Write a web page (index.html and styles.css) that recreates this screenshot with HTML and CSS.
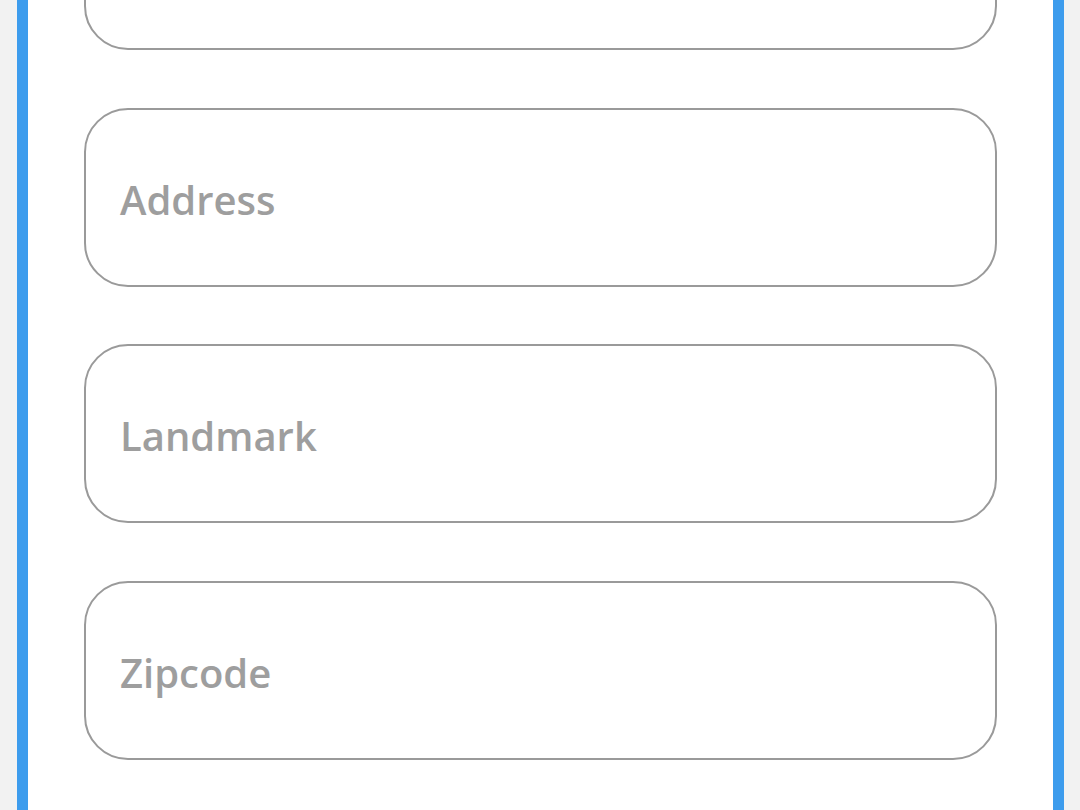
FILE: index.html
```html
<!DOCTYPE html>
<html lang="en">
<head>
<meta charset="utf-8">
<title>Address form</title>
<link rel="stylesheet" href="styles.css">
</head>
<body>
  <main class="frame">
    <form class="fields">
      <div class="field"></div>
      <div class="field"><span class="placeholder">Address</span></div>
      <div class="field"><span class="placeholder">Landmark</span></div>
      <div class="field"><span class="placeholder">Zipcode</span></div>
    </form>
  </main>
</body>
</html>
```

FILE: styles.css
```css
html, body {
  margin: 0;
  padding: 0;
  height: 100%;
  overflow: hidden;
}

body {
  background: #f2f2f2;
  font-family: "Open Sans", "Liberation Sans", sans-serif;
}

.frame {
  box-sizing: border-box;
  margin-left: 17px;
  width: 1047px;
  height: 810px;
  background: #ffffff;
  border-left: 11px solid #3d9ced;
  border-right: 11px solid #3d9ced;
  padding: 0 56px;
  overflow: hidden;
}

.fields {
  display: flex;
  flex-direction: column;
  gap: 57.5px;
  margin-top: -129px;
}

.field {
  box-sizing: border-box;
  height: 179px;
  border: 2px solid #9a9a9a;
  border-radius: 44px;
  display: flex;
  align-items: center;
  padding-left: 34px;
  padding-top: 4px;
}

.placeholder {
  font-size: 40px;
  font-weight: 600;
  color: #9e9e9e;
}
```
